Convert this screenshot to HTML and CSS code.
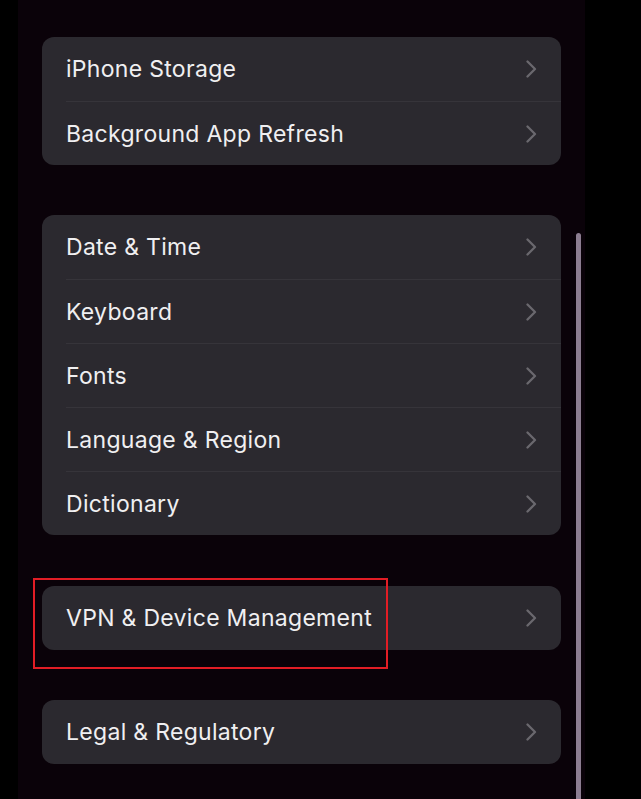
FILE: index.html
```html
<!DOCTYPE html>
<html>
    <head>
        <title>General</title>
        <link rel="stylesheet" href="styles.css">
    </head>
    <body>
    <div class="screen">
        <div class="group">
            <div class="row"><span>iPhone Storage</span><svg class="chev" viewBox="0 0 11 18"><polyline points="1.5,1.5 9,9 1.5,16.5"/></svg></div>
            <div class="row"><span>Background App Refresh</span><svg class="chev" viewBox="0 0 11 18"><polyline points="1.5,1.5 9,9 1.5,16.5"/></svg></div>
        </div>

        <div class="group">
            <div class="row"><span>Date &amp; Time</span><svg class="chev" viewBox="0 0 11 18"><polyline points="1.5,1.5 9,9 1.5,16.5"/></svg></div>
            <div class="row"><span>Keyboard</span><svg class="chev" viewBox="0 0 11 18"><polyline points="1.5,1.5 9,9 1.5,16.5"/></svg></div>
            <div class="row"><span>Fonts</span><svg class="chev" viewBox="0 0 11 18"><polyline points="1.5,1.5 9,9 1.5,16.5"/></svg></div>
            <div class="row"><span>Language &amp; Region</span><svg class="chev" viewBox="0 0 11 18"><polyline points="1.5,1.5 9,9 1.5,16.5"/></svg></div>
            <div class="row"><span>Dictionary</span><svg class="chev" viewBox="0 0 11 18"><polyline points="1.5,1.5 9,9 1.5,16.5"/></svg></div>
        </div>

        <div class="group marked">
            <div class="row"><span>VPN &amp; Device Management</span><svg class="chev" viewBox="0 0 11 18"><polyline points="1.5,1.5 9,9 1.5,16.5"/></svg></div>
            <div class="highlight"></div>
        </div>

        <div class="group">
            <div class="row"><span>Legal &amp; Regulatory</span><svg class="chev" viewBox="0 0 11 18"><polyline points="1.5,1.5 9,9 1.5,16.5"/></svg></div>
        </div>

        <div class="scrollbar"></div>
    </div>
    </body>
</html>
```

FILE: styles.css
```css
html, body{
    margin: 0;
    background: #000;
}
body{
    font-family: "Inter", "Liberation Sans", sans-serif;
    height: 799px;
    overflow: hidden;
}
.screen{
    position: relative;
    margin-left: 18px;
    width: 567px;
    height: 799px;
    background: #0a0209;
    padding-top: 37px;
    box-sizing: border-box;
}
.group{
    margin: 0 0 50px 24px;
    width: 519px;
    background: #2b292f;
    border-radius: 12px;
}
.marked{
    position: relative;
    margin-top: 51px;
}
.row{
    box-sizing: border-box;
    height: 64px;
    display: flex;
    align-items: center;
    justify-content: space-between;
    margin-left: 24px;
    padding-right: 24px;
    color: #f0eff1;
    font-size: 23px;
    letter-spacing: 0.3px;
    border-top: 1px solid #36343a;
}
.row:first-child{
    border-top: none;
}
.chev{
    width: 11px;
    height: 18px;
    fill: none;
    stroke: #6a686e;
    stroke-width: 2.3;
    stroke-linecap: round;
    stroke-linejoin: round;
}
.highlight{
    position: absolute;
    left: -9px;
    top: -8px;
    width: 351px;
    height: 87px;
    border: 2px solid #e21d25;
}
.scrollbar{
    position: absolute;
    left: 558px;
    top: 233px;
    width: 5px;
    height: 580px;
    background: #8c7d91;
    border-radius: 3px;
}
```
